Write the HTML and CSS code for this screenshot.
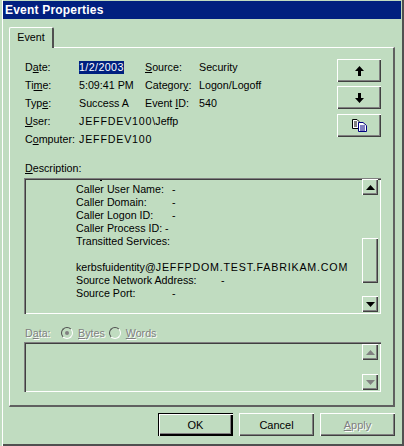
FILE: index.html
```html
<!DOCTYPE html>
<html lang="en">
  <head>
    <meta charset="UTF-8" />
    <title>Event Properties</title>
    <link rel="stylesheet" href="styles.css">
  </head>
  <body>
    <div class="window">
      <div class="titlebar">Event Properties</div>

      <div class="tabs">
        <div class="tab">Event</div>
      </div>

      <div class="panel">
        <div class="top">
          <div class="fields">
            <div class="label">D<u>a</u>te:</div>
            <div class="value"><span class="selected">1/2/2003</span></div>
            <div class="label"><u>S</u>ource:</div>
            <div class="value">Security</div>

            <div class="label">Ti<u>m</u>e:</div>
            <div class="value">5:09:41 PM</div>
            <div class="label">Categor<u>y</u>:</div>
            <div class="value">Logon/Logoff</div>

            <div class="label">Typ<u>e</u>:</div>
            <div class="value">Success A</div>
            <div class="label">Event <u>I</u>D:</div>
            <div class="value">540</div>

            <div class="label"><u>U</u>ser:</div>
            <div class="value wide"><span class="caps">JEFFDEV100</span>\Jeffp</div>

            <div class="label">C<u>o</u>mputer:</div>
            <div class="value wide"><span class="caps">JEFFDEV100</span></div>
          </div>

          <div class="side">
            <button class="btn small">
              <svg width="9" height="10" viewBox="0 0 9 10"><path d="M4.500 0 9 5H6V10H3V5H0Z" fill="#000"/></svg>
            </button>
            <button class="btn small">
              <svg width="9" height="10" viewBox="0 0 9 10"><path d="M3 0H6V5H9L4.500 10 0 5H3Z" fill="#000"/></svg>
            </button>
            <button class="btn small copy">
              <svg width="15" height="13" viewBox="0 0 15 13">
                <path d="M.5.5H5L7 2.500V9.500H.5Z" fill="#fff" stroke="#000"/>
                <path d="M2 3H5M2 5H5M2 7H5" stroke="#000"/>
                <path d="M6.500 3.500H11L14.500 6.500V12.500H6.500Z" fill="#fff" stroke="#000080"/>
                <path d="M8 7H13M8 9H13M8 11H13" stroke="#000080"/>
              </svg>
            </button>
          </div>
        </div>

        <div class="section-label"><u>D</u>escription:</div>
        <div class="box desc">
          <div class="desc-text">
            <!-- tail of the line scrolled out above -->
            <div class="clip-mark"></div>
            <div class="line"><span class="key">Caller User Name:</span><span>-</span></div>
            <div class="line"><span class="key">Caller Domain:</span><span>-</span></div>
            <div class="line"><span class="key">Caller Logon ID:</span><span>-</span></div>
            <div class="line">Caller Process ID: -</div>
            <div class="line">Transitted Services:</div>
            <div class="line"></div>
            <div class="line"><span>kerbsfuidentity@<span class="caps">JEFFPDOM.TEST.FABRIKAM.COM</span></span></div>
            <div class="line"><span class="key long">Source Network Address:</span><span>-</span></div>
            <div class="line"><span class="key">Source Port:</span><span>-</span></div>
          </div>
          <div class="scrollbar desc-scroll">
            <div class="sb-btn">
              <svg width="9" height="5" viewBox="0 0 9 5"><path d="M4.500 0 9 5H0Z" fill="#000"/></svg>
            </div>
            <div class="track"><div class="thumb"></div></div>
            <div class="sb-btn">
              <svg width="9" height="5" viewBox="0 0 9 5"><path d="M0 0H9L4.500 5Z" fill="#000"/></svg>
            </div>
          </div>
        </div>

        <div class="data-row">
          <span class="data-label">D<u>a</u>ta:</span>
          <span class="radio checked"></span>
          <span class="radio-text"><u>B</u>ytes</span>
          <span class="radio"></span>
          <span class="radio-text"><u>W</u>ords</span>
        </div>
        <div class="box data">
          <div class="scrollbar">
            <div class="sb-btn">
              <svg width="9" height="5" viewBox="0 0 9 5"><path d="M4.500 0 9 5H0Z" fill="#808080"/></svg>
            </div>
            <div class="sb-btn">
              <svg width="9" height="5" viewBox="0 0 9 5"><path d="M0 0H9L4.500 5Z" fill="#808080"/></svg>
            </div>
          </div>
        </div>
      </div>

      <div class="footer">
        <button class="btn action default">OK</button>
        <button class="btn action">Cancel</button>
        <button class="btn action disabled"><u>A</u>pply</button>
      </div>
    </div>
  </body>
</html>
```

FILE: styles.css
```css
html,
body {
  margin: 0;
  height: 100%;
  overflow: hidden;
}

body {
  font-family: "Liberation Sans", Arial, sans-serif;
  font-size: 10.7px;
  color: #000;
  background: #c0dcc0;
}

.window {
  box-sizing: border-box;
  width: 404px;
  height: 446px;
  padding: 1px 3px 2px 3px;
  box-shadow: inset 2px 0 #c0dcc0, inset 3px 0 #fff, inset -2px -2px #505050;
  display: flex;
  flex-direction: column;
}

.titlebar {
  height: 18px;
  padding-left: 2px;
  background: #00207f;
  color: #fff;
  font-size: 12px;
  font-weight: bold;
  letter-spacing: 0.2px;
  line-height: 18px;
}

.tabs {
  display: flex;
  height: 28px;
  padding: 8px 0 0 6px;
  box-sizing: border-box;
  align-items: flex-end;
}

.tab {
  position: relative;
  z-index: 1;
  width: 45px;
  height: 21px;
  margin-bottom: -1px;
  box-sizing: border-box;
  padding-top: 2px;
  text-align: center;
  line-height: 14px;
  background: #c0dcc0;
  border-radius: 2px 2px 0 0;
  border-top: 1px solid #fff;
  border-left: 1px solid #fff;
  border-right: 2px solid #505050;
}

.panel {
  box-sizing: border-box;
  width: 386px;
  height: 360px;
  margin-left: 6px;
  padding: 10px 12px 0 15px;
  border-top: 1px solid #fff;
  border-left: 1px solid #fff;
  border-right: 2px solid #606060;
  border-bottom: 2px solid #606060;
}

.top {
  display: flex;
  justify-content: space-between;
  height: 103px;
}

.fields {
  display: grid;
  grid-template-columns: 54px 66px 54px auto;
  grid-auto-rows: 18px;
  line-height: 18px;
  white-space: nowrap;
}

.wide {
  grid-column: 2 / 5;
}

.caps {
  letter-spacing: 0.8px;
}

.selected {
  display: inline-block;
  background: #00207f;
  color: #fff;
  line-height: 13px;
  letter-spacing: 0.4px;
}

.side {
  display: flex;
  flex-direction: column;
  gap: 4px;
  padding-top: 1px;
}

.btn {
  display: flex;
  align-items: center;
  justify-content: center;
  padding: 0;
  border: 0;
  background: #c0dcc0;
  font-family: inherit;
  font-size: 11px;
  color: #000;
  box-shadow: inset 1px 1px #fff, inset -1px -1px #404040, inset -2px -2px #808080;
}

.small {
  width: 44px;
  height: 23px;
}

.copy {
  margin-top: 1px;
}

.section-label {
  height: 14px;
  line-height: 14px;
}

.box {
  box-sizing: border-box;
  display: flex;
  justify-content: space-between;
  width: 357px;
  margin-left: -1px;
  padding: 2px 2px 2px 0;
  box-shadow: inset 1px 1px #808080, inset 2px 2px #404040, inset -1px -1px #fff;
}

.desc {
  height: 136px;
  margin-top: 3px;
}

.desc-text {
  flex: 1;
  overflow: hidden;
  padding-left: 52px;
  line-height: 13px;
  white-space: nowrap;
}

.clip-mark {
  width: 2px;
  height: 1px;
  margin: 0 0 2px 24px;
  background: #000;
}

.line {
  display: flex;
  height: 13px;
}

.key {
  width: 96px;
}

.key.long {
  width: 145px;
}

.scrollbar {
  width: 16px;
  margin-right: 1px;
  display: flex;
  flex-direction: column;
  justify-content: space-between;
}

.desc-scroll {
  margin-top: -1px;
}

.sb-btn {
  width: 16px;
  height: 16px;
  display: flex;
  align-items: center;
  justify-content: center;
  box-shadow: inset 1px 1px #fff, inset -1px -1px #404040, inset -2px -2px #808080;
}

.track {
  flex: 1;
  padding-top: 43px;
}

.thumb {
  height: 45px;
  box-shadow: inset 1px 1px #fff, inset -1px -1px #404040, inset -2px -2px #808080;
}

.data-row {
  display: flex;
  align-items: center;
  height: 18px;
  margin-top: 10px;
  color: #808080;
  text-shadow: 1px 1px #fff;
}

.data-label {
  width: 36px;
}

.radio {
  box-sizing: border-box;
  width: 12px;
  height: 12px;
  border-radius: 50%;
  border: 1px solid;
  border-color: #505050 #fff #fff #505050;
  display: flex;
  align-items: center;
  justify-content: center;
}

.radio.checked::after {
  content: "";
  width: 4px;
  height: 4px;
  border-radius: 50%;
  background: #808080;
}

.radio-text {
  margin: 0 4px 0 5px;
}

.data {
  height: 50px;
  justify-content: flex-end;
}

.footer {
  display: flex;
  justify-content: flex-end;
  gap: 6px;
  margin-top: 6px;
  padding-right: 6px;
}

.action {
  box-sizing: border-box;
  width: 75px;
  height: 23px;
}

.default {
  box-shadow: inset 1px 1px #000, inset 2px 2px #fff, inset -2px -2px #000, inset -3px -3px #808080;
}

.disabled {
  color: #808080;
  text-shadow: 1px 1px #fff;
}
```
